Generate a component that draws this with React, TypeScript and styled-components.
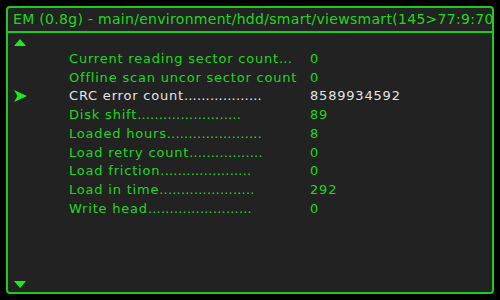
import React from "react";
import styled, { createGlobalStyle } from "styled-components";

const GlobalStyle = createGlobalStyle`
  html, body {
    margin: 0;
    padding: 0;
    background: #000;
  }
`;

const Screen = styled.div`
  width: 500px;
  height: 300px;
  padding: 6px;
  box-sizing: border-box;
  background: #000;
  font-family: "DejaVu Sans", "Verdana", sans-serif;
`;

const Panel = styled.div`
  height: 100%;
  box-sizing: border-box;
  border: 2px solid #1ccc1c;
  border-radius: 4px;
  background: #222222;
  display: flex;
  flex-direction: column;
  overflow: hidden;
`;

const Header = styled.div`
  height: 23px;
  line-height: 22px;
  padding-left: 5px;
  border-bottom: 2px solid #1ccc1c;
  color: #1ed81e;
  font-size: 14px;
  letter-spacing: 0.3px;
  white-space: nowrap;
  overflow: hidden;
`;

const Body = styled.div`
  flex: 1;
  display: flex;
  flex-direction: column;
  padding: 6px 6px 4px 6px;
`;

const Arrow = styled.div<{ $down?: boolean }>`
  width: 0;
  height: 0;
  border-left: 6px solid transparent;
  border-right: 6px solid transparent;
  ${(p) =>
    p.$down
      ? "border-top: 7px solid #14f014;"
      : "border-bottom: 7px solid #14f014;"}
  margin-top: ${(p) => (p.$down ? "auto" : "0")};
`;

const List = styled.div`
  margin-top: 3px;
  display: flex;
  flex-direction: column;
`;

const Row = styled.div<{ $active?: boolean }>`
  display: grid;
  grid-template-columns: 55px 241px auto;
  align-items: center;
  height: 18.75px;
  font-size: 13px;
  letter-spacing: 0.8px;
  color: ${(p) => (p.$active ? "#e4e4e4" : "#1ed81e")};
  white-space: nowrap;
`;

const Marker = styled.div`
  display: flex;
  align-items: center;
`;

const Label = styled.div`
  overflow: hidden;
`;

const Dots = styled.span`
  letter-spacing: 0.2px;
`;

const Value = styled.div``;

type Item = { label: string; dots: number; value: string };

const items: Item[] = [
  { label: "Current reading sector count", dots: 3, value: "0" },
  { label: "Offline scan uncor sector count", dots: 0, value: "0" },
  { label: "CRC error count", dots: 18, value: "8589934592" },
  { label: "Disk shift", dots: 24, value: "89" },
  { label: "Loaded hours", dots: 22, value: "8" },
  { label: "Load retry count", dots: 17, value: "0" },
  { label: "Load friction", dots: 21, value: "0" },
  { label: "Load in time", dots: 22, value: "292" },
  { label: "Write head", dots: 24, value: "0" },
];

const Pointer = () => (
  <svg width="13" height="12" viewBox="0 0 13 12">
    <path d="M0 0 L13 6 L0 12 L3.5 6 Z" fill="#14f014" />
  </svg>
);

export default function App() {
  return (
    <>
      <GlobalStyle />
      <Screen>
        <Panel>
          <Header>EM (0.8g) - main/environment/hdd/smart/viewsmart(145&gt;77:9:70)</Header>
          <Body>
            <Arrow />
            <List>
              {items.map((it, i) => (
                <Row key={i} $active={i === 2}>
                  <Marker>{i === 2 && <Pointer />}</Marker>
                  <Label>
                    {it.label}
                    <Dots>{".".repeat(it.dots)}</Dots>
                  </Label>
                  <Value>{it.value}</Value>
                </Row>
              ))}
            </List>
            <Arrow $down />
          </Body>
        </Panel>
      </Screen>
    </>
  );
}
